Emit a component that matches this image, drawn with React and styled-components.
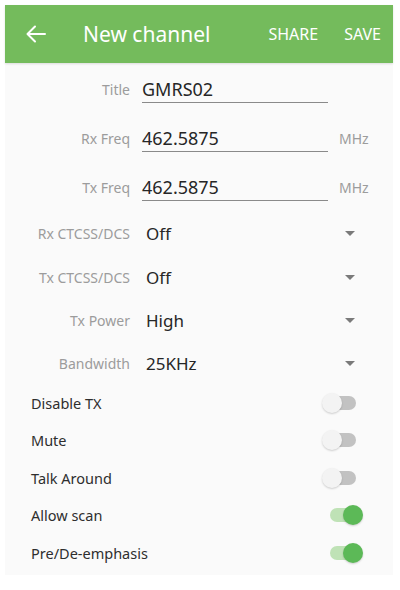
import React, { useState } from "react";
import styled, { createGlobalStyle } from "styled-components";

const GlobalStyle = createGlobalStyle`
  html, body { margin: 0; padding: 0; background: #ffffff; }
  body { font-family: "Noto Sans", "Open Sans", "Liberation Sans", sans-serif; }
  * { box-sizing: border-box; }
`;

const Page = styled.div`
  width: 400px;
  height: 590px;
  padding: 5px 7px 15px 5px;
  background: #ffffff;
`;

const Screen = styled.div`
  height: 100%;
  display: flex;
  flex-direction: column;
  background: #fafafa;
`;

const AppBar = styled.div`
  height: 58px;
  flex: none;
  display: flex;
  align-items: center;
  background: #74bb5c;
  color: #ffffff;
  padding: 0 12px 0 20px;
  box-shadow: 0 1px 2px rgba(0, 0, 0, 0.12);
`;

const BackButton = styled.button`
  border: 0;
  background: none;
  padding: 0;
  width: 22px;
  height: 22px;
  display: flex;
  align-items: center;
  justify-content: center;
  color: #ffffff;
  margin-right: 36px;
`;

const BarTitle = styled.div`
  flex: 1;
  font-size: 21px;
  font-weight: 400;
`;

const BarAction = styled.button`
  border: 0;
  background: none;
  color: #ffffff;
  font-family: inherit;
  font-size: 16px;
  font-weight: 400;
  padding: 0;
  margin-left: ${(p) => p.$gap || 0}px;
`;

const Form = styled.div`
  display: flex;
  flex-direction: column;
  padding-top: 2px;
`;

const FieldRow = styled.div`
  height: ${(p) => p.$h}px;
  display: grid;
  grid-template-columns: 125px 186px 1fr;
  column-gap: 12px;
  align-items: center;
`;

const Label = styled.div`
  text-align: right;
  color: #9c9c9c;
  font-size: 14px;
  white-space: nowrap;
`;

const TextField = styled.div`
  position: relative;
  height: 100%;
  display: flex;
  align-items: center;
  font-size: 18px;
  color: #262626;
  &::after {
    content: "";
    position: absolute;
    left: 0;
    right: 0;
    top: calc(50% + 13px);
    height: 1px;
    background: #8a8a8a;
  }
`;

const Unit = styled.div`
  color: #9c9c9c;
  font-size: 14px;
  margin-left: -1px;
`;

const SelectRow = styled.div`
  height: ${(p) => p.$h}px;
  display: grid;
  grid-template-columns: 125px 1fr;
  column-gap: 12px;
  align-items: center;
  padding-right: 38px;
`;

const SelectValue = styled.div`
  display: flex;
  align-items: center;
  justify-content: space-between;
  padding-left: 4px;
  font-size: 17px;
  color: #262626;
`;

const Caret = styled.span`
  width: 0;
  height: 0;
  border-left: 5px solid transparent;
  border-right: 5px solid transparent;
  border-top: 5px solid #7a7a7a;
`;

const SwitchList = styled.div`
  display: flex;
  flex-direction: column;
  padding: 0 30px 0 26px;
`;

const SwitchRow = styled.div`
  height: 37.5px;
  display: flex;
  align-items: center;
  justify-content: space-between;
  font-size: 14.5px;
  color: #2e2e2e;
`;

const SwitchBox = styled.div`
  position: relative;
  width: 41px;
  height: 22px;
  display: flex;
  align-items: center;
  justify-content: center;
`;

const Track = styled.div`
  width: 26px;
  height: 14px;
  border-radius: 7px;
  background: ${(p) => (p.$on ? "#bfe2b6" : "#c2c2c2")};
`;

const Thumb = styled.div`
  position: absolute;
  top: 1px;
  ${(p) => (p.$on ? "right: 0;" : "left: 0;")}
  width: 20px;
  height: 20px;
  border-radius: 50%;
  background: ${(p) => (p.$on ? "#5cb957" : "#f3f3f3")};
  box-shadow: 0 1px 2px rgba(0, 0, 0, 0.18);
`;

function Switch({ on }) {
  return (
    <SwitchBox>
      <Track $on={on} />
      <Thumb $on={on} />
    </SwitchBox>
  );
}

const switches = [
  { label: "Disable TX", on: false },
  { label: "Mute", on: false },
  { label: "Talk Around", on: false },
  { label: "Allow scan", on: true },
  { label: "Pre/De-emphasis", on: true },
];

const selects = [
  { label: "Rx CTCSS/DCS", value: "Off", h: 44 },
  { label: "Tx CTCSS/DCS", value: "Off", h: 44 },
  { label: "Tx Power", value: "High", h: 43 },
  { label: "Bandwidth", value: "25KHz", h: 42 },
];

export default function App() {
  const [items] = useState(switches);
  return (
    <Page>
      <GlobalStyle />
      <Screen>
        <AppBar>
          <BackButton aria-label="back">
            <svg width="20" height="18" viewBox="0 0 20 18" fill="none">
              <path
                d="M19 9H2M9 1.5L1.5 9L9 16.5"
                stroke="#ffffff"
                strokeWidth="2"
                strokeLinecap="round"
                strokeLinejoin="round"
              />
            </svg>
          </BackButton>
          <BarTitle>New channel</BarTitle>
          <BarAction>SHARE</BarAction>
          <BarAction $gap={26}>SAVE</BarAction>
        </AppBar>
        <Form>
          <FieldRow $h={48}>
            <Label>Title</Label>
            <TextField>GMRS02</TextField>
            <span />
          </FieldRow>
          <FieldRow $h={50}>
            <Label>Rx Freq</Label>
            <TextField>462.5875</TextField>
            <Unit>MHz</Unit>
          </FieldRow>
          <FieldRow $h={48}>
            <Label>Tx Freq</Label>
            <TextField>462.5875</TextField>
            <Unit>MHz</Unit>
          </FieldRow>
          {selects.map((s) => (
            <SelectRow key={s.label} $h={s.h}>
              <Label>{s.label}</Label>
              <SelectValue>
                {s.value}
                <Caret />
              </SelectValue>
            </SelectRow>
          ))}
          <SwitchList>
            {items.map((s) => (
              <SwitchRow key={s.label}>
                {s.label}
                <Switch on={s.on} />
              </SwitchRow>
            ))}
          </SwitchList>
        </Form>
      </Screen>
    </Page>
  );
}
